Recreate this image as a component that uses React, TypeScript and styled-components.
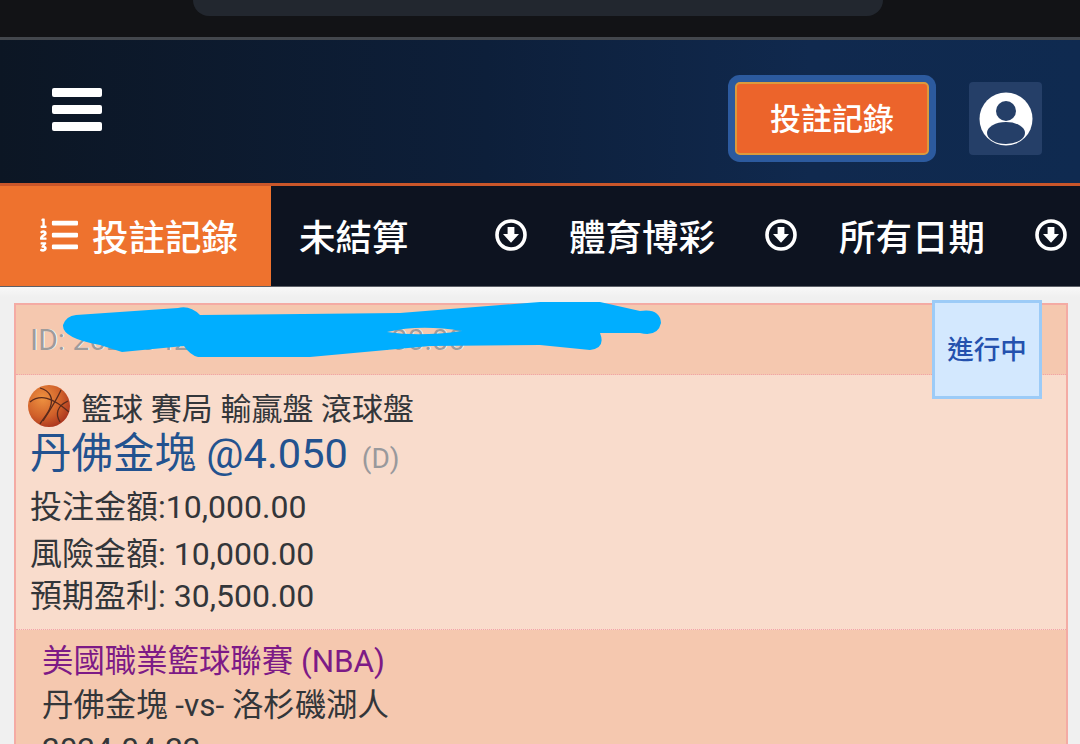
import React from "react";
import styled, { createGlobalStyle } from "styled-components";
import { FaListOl } from "react-icons/fa";

const GlobalStyle = createGlobalStyle`
  html, body {
    margin: 0;
    padding: 0;
    background: #f1f1f1;
    overflow: hidden;
  }
  * {
    box-sizing: border-box;
  }
`;

const Page = styled.div`
  position: relative;
  width: 1080px;
  height: 744px;
  overflow: hidden;
  font-family: Roboto, "Noto Sans CJK TC", sans-serif;
`;

const TopBar = styled.div`
  height: 40px;
  background: #121316;
  border-bottom: 3px solid #43474d;
  display: flex;
  justify-content: center;
`;

const TopPill = styled.div`
  width: 690px;
  height: 16px;
  margin-left: -4px;
  background: #22272f;
  border-radius: 0 0 34px 34px;
`;

const Header = styled.header`
  height: 146px;
  padding: 35px 38px 0 52px;
  display: flex;
  align-items: flex-start;
  background: linear-gradient(90deg, #0c1624 0%, #0d1f3a 45%, #10294e 75%, #0f2a50 100%);
  border-bottom: 3px solid #c9562a;
`;

const Burger = styled.div`
  width: 50px;
  margin-top: 13px;
  display: flex;
  flex-direction: column;
  gap: 8px;
`;

const BurgerBar = styled.span`
  height: 9px;
  background: #ffffff;
  border-radius: 2px;
`;

const RecordButton = styled.button`
  margin: 7px 0 0 auto;
  width: 194px;
  height: 73px;
  background: #ec642b;
  border: 2px solid #dc9a3c;
  border-radius: 5px;
  box-shadow: 0 0 0 7px #2c5a9e;
  color: #ffffff;
  font-family: inherit;
  font-size: 31px;
  font-weight: 500;
  padding: 0 0 4px;
`;

const UserButton = styled.div`
  margin: 7px 0 0 40px;
  width: 73px;
  height: 73px;
  background: #253f68;
  border-radius: 4px;
  display: flex;
  align-items: center;
  justify-content: center;
`;

const TabBar = styled.nav`
  height: 101px;
  display: flex;
  background: #0d1320;
  border-bottom: 1px solid #5c6068;
`;

const ActiveTab = styled.div`
  width: 271px;
  flex: none;
  display: flex;
  align-items: center;
  gap: 14px;
  padding: 0 0 2px 40px;
  background: #ee722e;
  color: #ffffff;
  font-size: 36.5px;
  font-weight: 500;
`;

const Filter = styled.div`
  width: 270px;
  flex: none;
  display: flex;
  align-items: center;
  justify-content: space-between;
  padding: 0 14px 2px 28px;
  color: #ffffff;
  font-size: 36.5px;
  font-weight: 500;
`;

const Content = styled.main`
  padding: 16px 12px 0 14px;
  background: linear-gradient(180deg, #f8f8f8 0, #f0f0f0 10px);
`;

const Card = styled.section`
  position: relative;
  border: 2px solid #f4aba4;
  border-bottom: 0;
  color: #33363a;
`;

const CardHead = styled.div`
  height: 70px;
  padding: 0 14px;
  display: flex;
  align-items: center;
  background: #f5c8af;
  border-bottom: 1px dotted #f2a3a8;
  color: #a09c9a;
  font-size: 30px;
  text-shadow: 1px 0 0 #ffffff;
`;

const StatusBadge = styled.div`
  position: absolute;
  top: -5px;
  right: 24px;
  width: 110px;
  height: 99px;
  display: flex;
  align-items: center;
  justify-content: center;
  padding-bottom: 4px;
  background: #d3e8fe;
  border: 3px solid #9ccbf7;
  color: #2451ae;
  font-size: 26.5px;
  font-weight: 500;
`;

const CardBody = styled.div`
  height: 255px;
  padding: 10px 14px 0;
  background: #f9dccc;
  border-bottom: 1px dotted #f2a3a8;
`;

const SportRow = styled.div`
  height: 42px;
  display: flex;
  align-items: center;
  gap: 11px;
  margin-left: -2px;
  font-size: 31px;
`;

const Pick = styled.div`
  height: 54px;
  line-height: 54px;
  font-size: 41.5px;
  color: #23528f;
  white-space: nowrap;
`;

const PickTag = styled.span`
  margin-left: 14px;
  font-size: 28px;
  color: #99999c;
`;

const AmountRow = styled.div<{ $height: number }>`
  height: ${(p) => p.$height}px;
  line-height: ${(p) => p.$height}px;
  font-size: 32px;
  white-space: nowrap;
`;

const MatchInfo = styled.div`
  padding: 10px 26px 0;
  height: 200px;
  background: #f5c8af;
`;

const MatchLine = styled.div<{ $league?: boolean }>`
  height: 44px;
  line-height: 44px;
  font-size: 31.4px;
  color: ${(p) => (p.$league ? "#7d1a86" : "#33363a")};
  white-space: nowrap;
`;

const Scribble = styled.svg`
  position: absolute;
  top: 0;
  left: 0;
`;

const ArrowCircle = () => (
  <svg width="32" height="32" viewBox="0 0 32 32">
    <circle cx="16" cy="16" r="14" fill="none" stroke="#ffffff" strokeWidth="3.6" />
    <path d="M12.6 8h6.8v7h4.6L16 23.8 8 15h4.6z" fill="#ffffff" />
  </svg>
);

const UserIcon = () => (
  <svg width="54" height="54" viewBox="0 0 54 54">
    <circle cx="27" cy="27" r="26.5" fill="#ffffff" />
    <circle cx="27" cy="19" r="10" fill="#253f68" />
    <ellipse cx="27" cy="41" rx="19" ry="11" fill="#253f68" />
  </svg>
);

const Basketball = () => (
  <svg width="42" height="42" viewBox="0 0 42 42">
    <defs>
      <radialGradient id="ball" cx="35%" cy="32%" r="75%">
        <stop offset="0%" stopColor="#ee9240" />
        <stop offset="60%" stopColor="#d0602a" />
        <stop offset="100%" stopColor="#a8321e" />
      </radialGradient>
    </defs>
    <circle cx="21" cy="21" r="21" fill="url(#ball)" />
    <g fill="none" stroke="#5a2a1c" strokeWidth="1.3">
      <path d="M2 17C12 9 24 12 41 27" />
      <path d="M12 3c10 3 14 10 10 20-2 6-8 12-10 16" />
      <path d="M33 5C29 14 24 22 15 36" />
      <path d="M32 37c-5-8-3-16 8-21" />
    </g>
  </svg>
);

const App = () => {
  const filters = ["未結算", "體育博彩", "所有日期"];
  return (
    <Page>
      <GlobalStyle />
      <TopBar>
        <TopPill />
      </TopBar>
      <Header>
        <Burger>
          <BurgerBar />
          <BurgerBar />
          <BurgerBar />
        </Burger>
        <RecordButton>投註記錄</RecordButton>
        <UserButton>
          <UserIcon />
        </UserButton>
      </Header>
      <TabBar>
        <ActiveTab>
          <FaListOl size={38} />
          投註記錄
        </ActiveTab>
        {filters.map((el) => (
          <Filter key={el}>
            {el}
            <ArrowCircle />
          </Filter>
        ))}
      </TabBar>
      <Content>
        <Card>
          <CardHead>ID: 2024042298300221 00:00:00</CardHead>
          <StatusBadge>進行中</StatusBadge>
          <CardBody>
            <SportRow>
              <Basketball />
              籃球 賽局 輸贏盤 滾球盤
            </SportRow>
            <Pick>
              丹佛金塊 @4.050<PickTag>(D)</PickTag>
            </Pick>
            <AmountRow $height={52}>投注金額:10,000.00</AmountRow>
            <AmountRow $height={42}>風險金額: 10,000.00</AmountRow>
            <AmountRow $height={42}>預期盈利: 30,500.00</AmountRow>
          </CardBody>
          <MatchInfo>
            <MatchLine $league>美國職業籃球聯賽 (NBA)</MatchLine>
            <MatchLine>丹佛金塊 -vs- 洛杉磯湖人</MatchLine>
            <MatchLine>2024-04-22</MatchLine>
          </MatchInfo>
        </Card>
      </Content>
      <Scribble width="1080" height="744" viewBox="0 0 1080 744">
        <path
          fillRule="evenodd"
          fill="#00aeff"
          d="M76 315 L178 308 Q190 305 200 315 L400 313 L540 302 L600 302 L640 311 Q660 308 661 323 Q658 337 640 333 L600 333 Q606 348 590 350 L540 345 L430 346 L310 357 L198 357 Q190 355 184 346 L122 352 L100 345 Q62 338 63 325 Q66 316 76 315 Z M387 332 Q420 324 462 331 Q420 337 387 332 Z"
        />
      </Scribble>
    </Page>
  );
};

export default App;
